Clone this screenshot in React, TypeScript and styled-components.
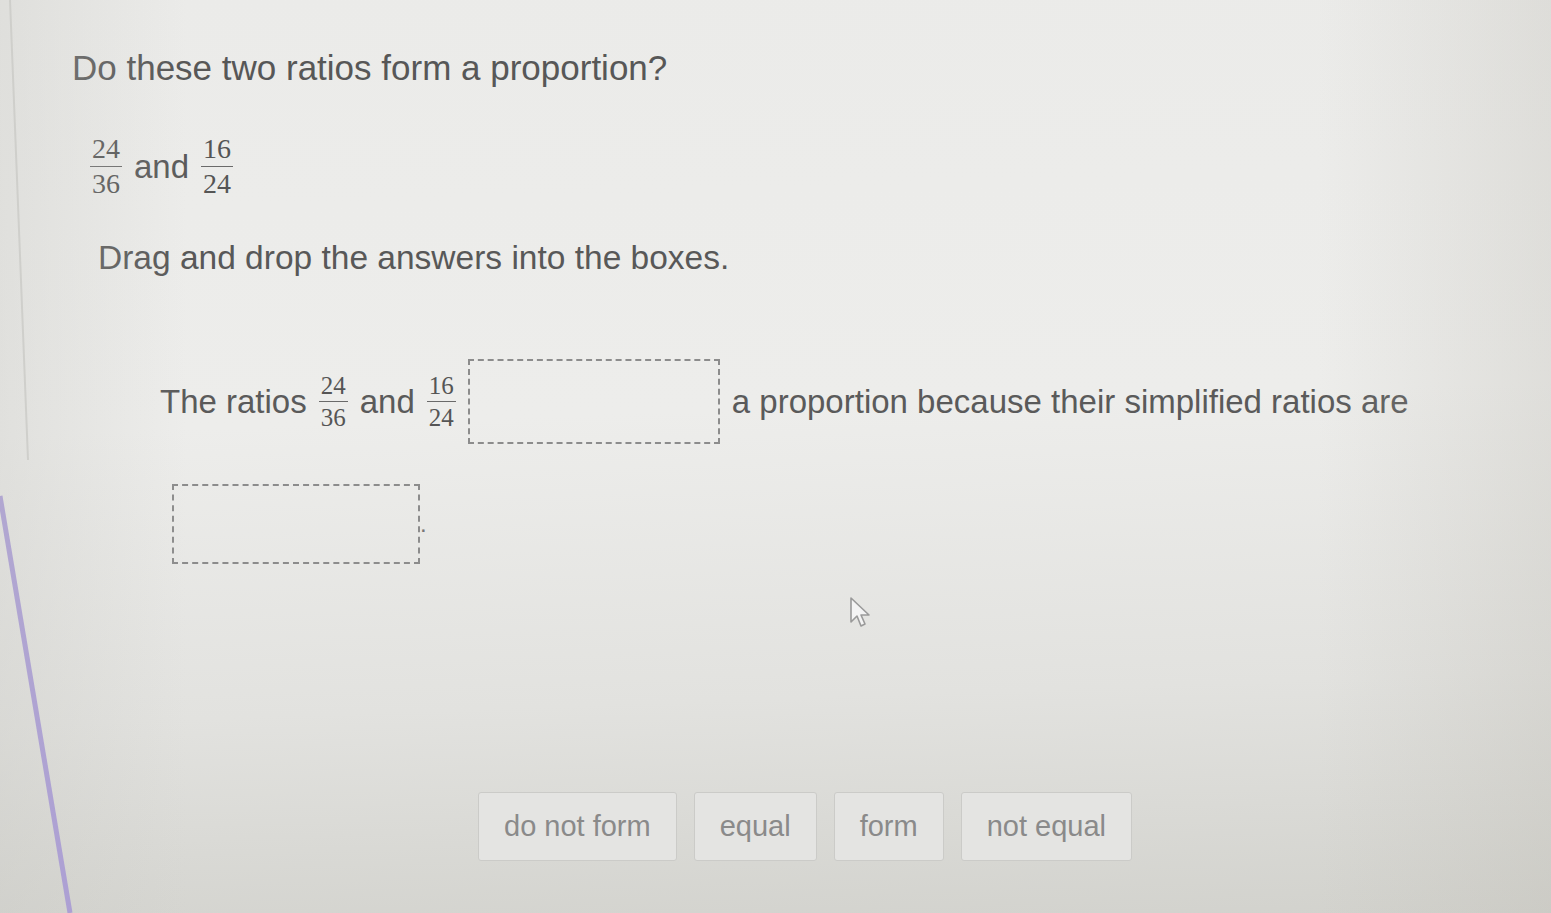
import React from 'react';
import styled, { createGlobalStyle } from 'styled-components';

const GlobalStyle = createGlobalStyle`
  html, body {
    margin: 0;
    padding: 0;
  }
  body {
    font-family: "Liberation Sans", Arial, sans-serif;
    color: #5a5a5a;
  }
`;

const answers = ['do not form', 'equal', 'form', 'not equal'];

function Fraction({ top, bottom, size }: { top: string; bottom: string; size: number }) {
  return (
    <Frac size={size}>
      <Num>{top}</Num>
      <Den>{bottom}</Den>
    </Frac>
  );
}

function App() {
  return (
    <>
      <GlobalStyle />
      <Page>
        <Title>Do these two ratios form a proportion?</Title>

        <RatioLine>
          <Fraction top="24" bottom="36" size={28} />
          <Word size={33}>and</Word>
          <Fraction top="16" bottom="24" size={28} />
        </RatioLine>

        <Instruction>Drag and drop the answers into the boxes.</Instruction>

        <Sentence>
          <SentenceRow>
            <Word size={33}>The ratios</Word>
            <Fraction top="24" bottom="36" size={25} />
            <Word size={33}>and</Word>
            <Fraction top="16" bottom="24" size={25} />
            <DropBox w={252} h={85} />
            <Word size={33}>a proportion because their simplified ratios are</Word>
          </SentenceRow>
          <SentenceRow indent={12}>
            <DropBox w={248} h={80} />
            <Dot>.</Dot>
          </SentenceRow>
        </Sentence>

        <Choices>
          {answers.map((a) => (
            <Choice key={a}>{a}</Choice>
          ))}
        </Choices>

        <Cursor width="26" height="34" viewBox="0 0 26 34">
          <path
            d="M3 2 L3 26 L9 20 L13 30 L17 28 L13 19 L21 19 Z"
            fill="#f4f4f4"
            stroke="#9a9a9a"
            strokeWidth="1.6"
            strokeLinejoin="round"
          />
        </Cursor>

        <Edge width="1551" height="913" viewBox="0 0 1551 913">
          <line x1="10" y1="0" x2="28" y2="460" stroke="#d2d2cf" strokeWidth="2" />
          <line x1="0" y1="496" x2="70" y2="913" stroke="#a595d8" strokeWidth="5" />
        </Edge>
      </Page>
    </>
  );
}

export default App;

const Page = styled.div`
  position: relative;
  height: 913px;
  overflow: hidden;
  box-sizing: border-box;
  padding-top: 48px;
  background: linear-gradient(178deg, #ebebe9 0%, #ededeb 45%, #e2e2df 75%, #d2d2cd 100%);
  &::after {
    content: '';
    position: absolute;
    inset: 0;
    pointer-events: none;
    background: linear-gradient(90deg, rgba(200, 200, 195, 0.35) 0%, rgba(255, 255, 255, 0) 12%, rgba(255, 255, 255, 0) 85%, rgba(190, 188, 180, 0.3) 100%);
  }
`;

const Title = styled.h1`
  margin: 0 0 0 72px;
  font-size: 35px;
  font-weight: normal;
  line-height: 40px;
  color: #575757;
`;

const RatioLine = styled.div`
  display: flex;
  align-items: center;
  gap: 12px;
  margin: 47px 0 0 90px;
`;

const Frac = styled.span<{ size: number }>`
  display: inline-flex;
  flex-direction: column;
  align-items: center;
  font-family: "Liberation Serif", "Times New Roman", serif;
  font-size: ${(p) => p.size}px;
  line-height: 1;
  color: #555;
`;

const Num = styled.span`
  padding: 0 2px 3px;
  border-bottom: 1.5px solid #6a6a6a;
`;

const Den = styled.span`
  padding: 3px 2px 0;
`;

const Word = styled.span<{ size: number }>`
  font-size: ${(p) => p.size}px;
  line-height: 1.2;
  color: #5a5a5a;
`;

const Instruction = styled.p`
  margin: 40px 0 0 98px;
  font-size: 33.5px;
  line-height: 40px;
  color: #585858;
`;

const Sentence = styled.div`
  margin: 81px 0 0 160px;
  display: flex;
  flex-direction: column;
  gap: 40px;
`;

const SentenceRow = styled.div<{ indent?: number }>`
  display: flex;
  align-items: center;
  gap: 12px;
  margin-left: ${(p) => p.indent ?? 0}px;
`;

const DropBox = styled.div<{ w: number; h: number }>`
  width: ${(p) => p.w}px;
  height: ${(p) => p.h}px;
  box-sizing: border-box;
  border: 2px dashed #8c8c8c;
`;

const Dot = styled.span`
  font-size: 24px;
  color: #777;
  margin-left: -12px;
`;

const Choices = styled.div`
  display: flex;
  gap: 17px;
  margin: 228px 0 0 478px;
`;

const Choice = styled.div`
  height: 69px;
  display: flex;
  align-items: center;
  padding: 0 25px;
  box-sizing: border-box;
  border: 1.5px solid #cbcbc8;
  border-radius: 3px;
  background: #e4e4e2;
  font-size: 29px;
  color: #8a8a8a;
`;

const Cursor = styled.svg`
  position: absolute;
  left: 848px;
  top: 596px;
`;

const Edge = styled.svg`
  position: absolute;
  left: 0;
  top: 0;
  pointer-events: none;
`;
